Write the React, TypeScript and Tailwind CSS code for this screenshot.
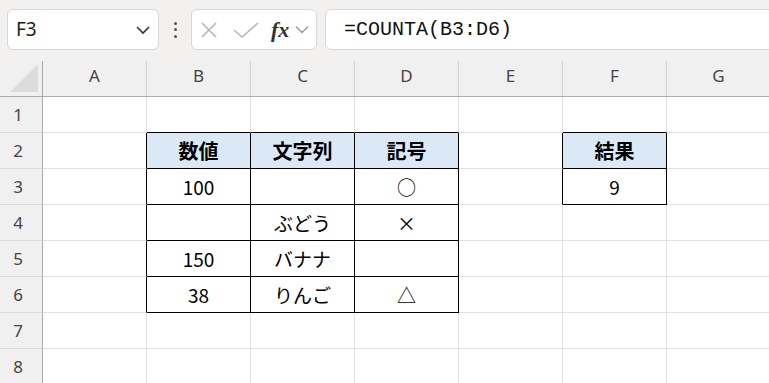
import React from "react";

const COLS = ["A", "B", "C", "D", "E", "F", "G"];
const ROWS = [1, 2, 3, 4, 5, 6, 7, 8];

type Cell = { t: string; h?: boolean };
const DATA: Record<string, Cell> = {
  B2: { t: "数値", h: true },
  C2: { t: "文字列", h: true },
  D2: { t: "記号", h: true },
  F2: { t: "結果", h: true },
  B3: { t: "100" },
  D3: { t: "○" },
  F3: { t: "9" },
  C4: { t: "ぶどう" },
  D4: { t: "×" },
  B5: { t: "150" },
  C5: { t: "バナナ" },
  B6: { t: "38" },
  C6: { t: "りんご" },
  D6: { t: "△" },
};

const inTable = (c: string, r: number) =>
  (["B", "C", "D"].includes(c) && r >= 2 && r <= 6) || (c === "F" && r >= 2 && r <= 3);

function GridCell({ c, r }: { c: string; r: number }) {
  const key = `${c}${r}`;
  const cell = DATA[key];
  const ci = COLS.indexOf(c);
  const right = COLS[ci + 1];
  const rightBlack = inTable(c, r) || (right ? inTable(right, r) : false);
  const bottomBlack = inTable(c, r) || inTable(c, r + 1);
  const bg = cell?.h ? "bg-[#dbe9f7]" : "bg-white";
  return (
    <div
      className={`w-[104px] h-[36px] shrink-0 border-r border-b flex items-center justify-center ${bg} ${
        rightBlack ? "border-r-black" : "border-r-[#e1e1e1]"
      } ${bottomBlack ? "border-b-black" : "border-b-[#e1e1e1]"}`}
    >
      {cell && (
        <span
          className={`text-[19px] leading-none text-black ${cell.h ? "font-bold text-[20px]" : ""}`}
          style={{ fontFamily: '"Noto Sans CJK JP", "Noto Sans", sans-serif' }}
        >
          {cell.t}
        </span>
      )}
    </div>
  );
}

export default function App() {
  return (
    <div
      className="w-[769px] h-[383px] overflow-hidden bg-white"
      style={{ fontFamily: '"Noto Sans", "Noto Sans CJK JP", sans-serif' }}
    >
      {/* Toolbar */}
      <div className="h-[61px] bg-[#f3f1f0] flex items-start pt-[9px] pl-[7px]">
        <div className="w-[152px] h-[41px] shrink-0 bg-white border border-[#d9d6d4] rounded-[6px] flex items-center pl-[8px] pr-[6px]">
          <span className="text-[19px] text-[#222] leading-none flex-1">F3</span>
          <svg width="16" height="10" viewBox="0 0 16 10" className="mr-[1px]">
            <path d="M2 2 L8 8 L14 2" fill="none" stroke="#333" strokeWidth="1.6" />
          </svg>
        </div>
        <div className="w-[32px] h-[41px] shrink-0 flex flex-col items-center justify-center gap-[3.5px]">
          <div className="w-[3px] h-[3px] bg-[#555] rounded-full" />
          <div className="w-[3px] h-[3px] bg-[#555] rounded-full" />
          <div className="w-[3px] h-[3px] bg-[#555] rounded-full" />
        </div>
        <div className="w-[126px] h-[41px] shrink-0 bg-white border border-[#d9d6d4] rounded-[6px] flex items-center pl-[9px]">
          <svg width="16" height="16" viewBox="0 0 16 16">
            <path d="M1 1 L15 15 M15 1 L1 15" stroke="#b5b5b5" strokeWidth="1.5" fill="none" />
          </svg>
          <svg width="26" height="16" viewBox="0 0 26 16" className="ml-[16px]">
            <path d="M1 8 L9 15 L25 1" stroke="#b5b5b5" strokeWidth="1.5" fill="none" />
          </svg>
          <span
            className="ml-[12px] text-[22px] italic font-bold text-[#333] leading-none"
            style={{ fontFamily: '"Liberation Serif", "DejaVu Serif", serif' }}
          >
            fx
          </span>
          <svg width="14" height="9" viewBox="0 0 14 9" className="ml-[6px]">
            <path d="M1 1.5 L7 7.5 L13 1.5" fill="none" stroke="#999" strokeWidth="1.4" />
          </svg>
        </div>
        <div className="flex-1 h-[41px] ml-[8px] -mr-[10px] bg-white border border-[#d9d6d4] rounded-[6px] flex items-center pl-[18px]">
          <span
            className="text-[20px] leading-none text-[#111]"
            style={{ fontFamily: '"Liberation Mono", "DejaVu Sans Mono", monospace' }}
          >
            =COUNTA(B3:D6)
          </span>
        </div>
      </div>

      {/* Column headers */}
      <div className="flex h-[36px] bg-[#f0f0f0] border-b border-[#ababab]">
        <div className="w-[43px] h-full shrink-0 border-r border-[#ababab] relative">
          <svg width="30" height="30" viewBox="0 0 30 30" className="absolute left-[10px] top-[3px]">
            <path d="M28 0 L28 28 L0 28 Z" fill="#dcdcdc" />
          </svg>
        </div>
        {COLS.map((c) => (
          <div
            key={c}
            className="w-[104px] h-full shrink-0 border-r border-[#d4d4d4] flex items-start justify-center pt-[4px]"
          >
            <span className="text-[17px] text-[#444] leading-[22px]">{c}</span>
          </div>
        ))}
      </div>

      {/* Rows */}
      {ROWS.map((r) => (
        <div key={r} className="flex">
          <div className="w-[43px] h-[36px] shrink-0 bg-[#f0f0f0] border-r border-r-[#ababab] border-b border-b-[#dcdcdc] flex items-center justify-center pr-[6px]">
            <span className="text-[17px] text-[#444] leading-none">{r}</span>
          </div>
          {COLS.map((c) => (
            <GridCell key={c} c={c} r={r} />
          ))}
        </div>
      ))}
    </div>
  );
}
